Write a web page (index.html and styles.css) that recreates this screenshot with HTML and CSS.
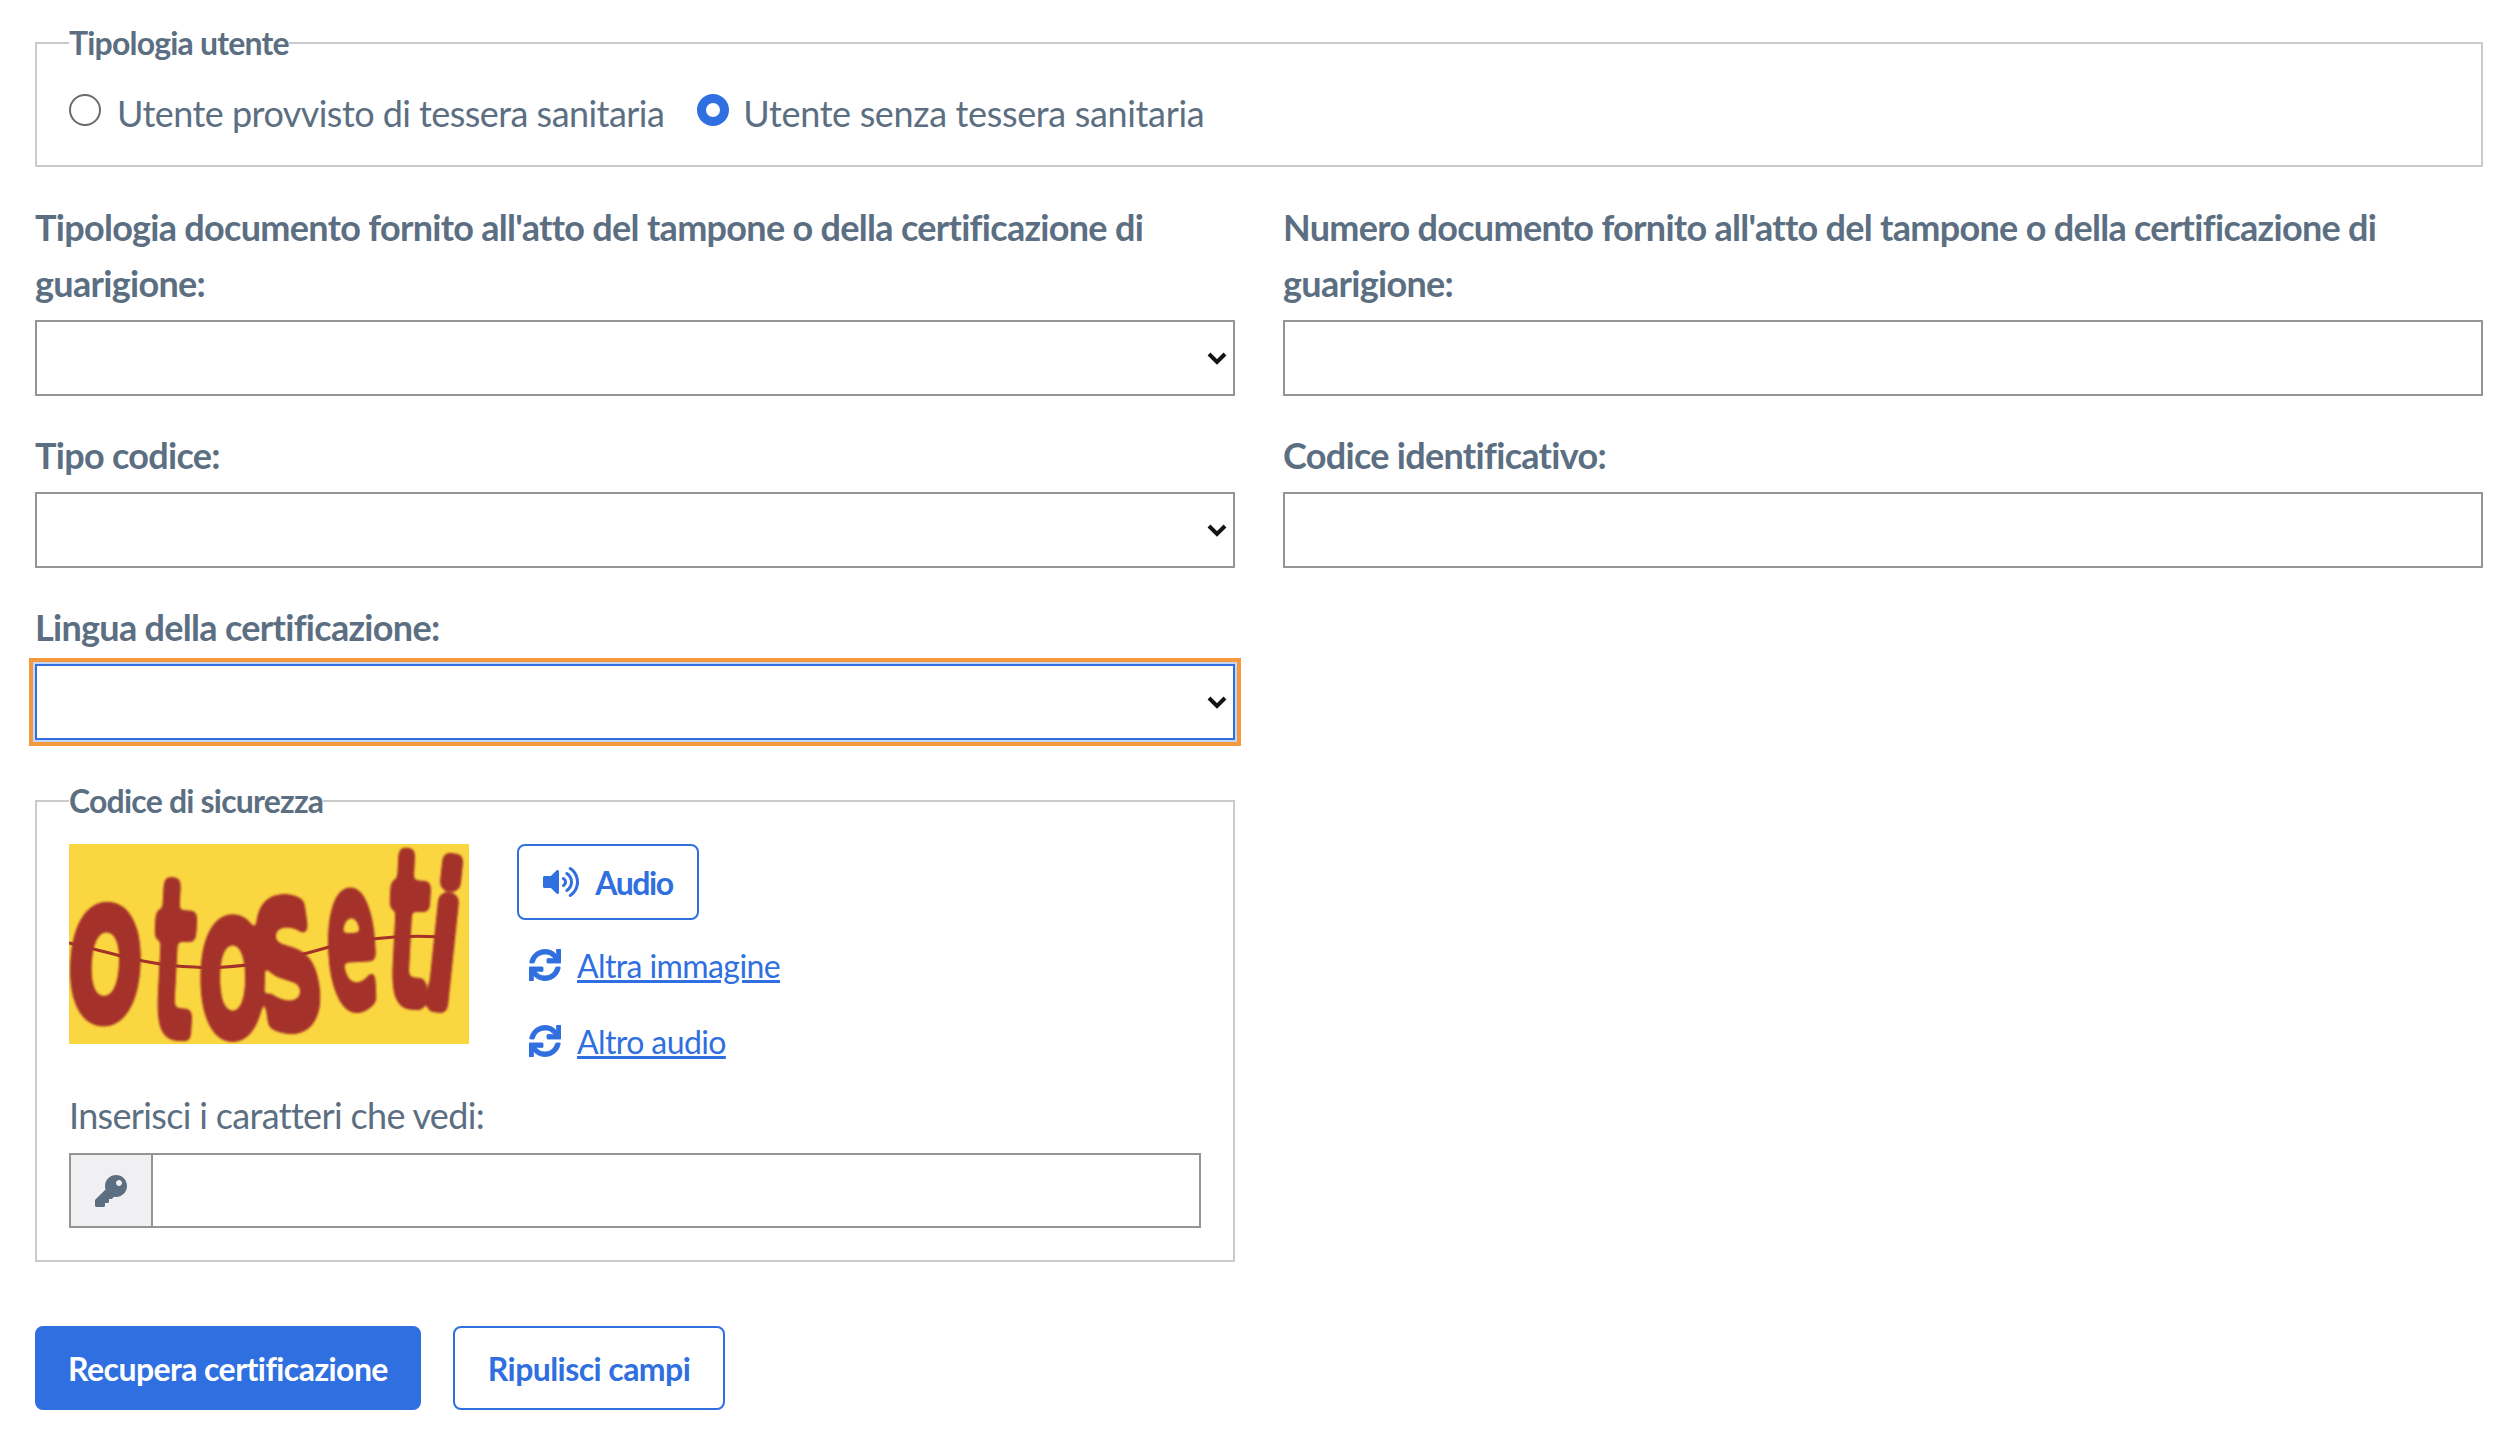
FILE: index.html
```html
<!DOCTYPE html>
<html lang="it">
<head>
    <meta charset="UTF-8">
    <meta name="viewport" content="width=device-width, initial-scale=1.0">
    <title>Recupera certificazione</title>
    <link rel="stylesheet" href="styles.css">
</head>
<body>
    <form class="page">
        <fieldset class="box box-user">
            <legend>Tipologia utente</legend>
            <div class="radio-row">
                <label class="radio"><input type="radio" name="tipo"><span>Utente provvisto di tessera sanitaria</span></label>
                <label class="radio"><input type="radio" name="tipo" checked><span>Utente senza tessera sanitaria</span></label>
            </div>
        </fieldset>

        <div class="form-grid">
            <div class="field">
                <label class="field-label">Tipologia documento fornito all'atto del tampone o della certificazione di guarigione:</label>
                <select class="control"><option></option></select>
            </div>
            <div class="field">
                <label class="field-label">Numero documento fornito all'atto del tampone o della certificazione di guarigione:</label>
                <input class="control" type="text">
            </div>
            <div class="field">
                <label class="field-label">Tipo codice:</label>
                <select class="control"><option></option></select>
            </div>
            <div class="field">
                <label class="field-label">Codice identificativo:</label>
                <input class="control" type="text">
            </div>
            <div class="field">
                <label class="field-label">Lingua della certificazione:</label>
                <select class="control focused"><option></option></select>
            </div>
        </div>

        <fieldset class="box box-captcha">
            <legend>Codice di sicurezza</legend>
            <div class="captcha-row">
                <svg class="captcha" viewBox="0 0 400 200" role="img" aria-label="otoseti">
                    <defs>
                        <filter id="soft" x="0" y="0" width="400" height="200" filterUnits="userSpaceOnUse" primitiveUnits="userSpaceOnUse">
                            <feGaussianBlur stdDeviation="2.5"/>
                            <feComponentTransfer><feFuncA type="linear" slope="9" intercept="-3.6"/></feComponentTransfer>
                            <feGaussianBlur stdDeviation="0.8"/>
                        </filter>
                        <filter id="line-soft" x="0" y="0" width="400" height="200" filterUnits="userSpaceOnUse" primitiveUnits="userSpaceOnUse">
                            <feGaussianBlur stdDeviation="0.7"/>
                        </filter>
                    </defs>
                    <rect width="400" height="200" fill="#fad640"/>
                    <path class="captcha-line" filter="url(#line-soft)" d="M0 99 C40 108 80 122 125 123 C170 126 220 115 260 103 C300 93 340 90 385 94"/>
                    <g class="captcha-letters" filter="url(#soft)">
                        <text transform="translate(-3,170) rotate(3) scale(1.2,1.9)">o</text>
                        <text transform="translate(82,187) rotate(3) scale(.98,2.08)">t</text>
                        <text transform="translate(130,187) scale(1.1,1.94)">o</text>
                        <text transform="translate(198,182) rotate(-8) scale(1.12,2.14)">s</text>
                        <text transform="translate(261,160) rotate(-3) scale(.8,1.92)">e</text>
                        <text transform="translate(317,156) rotate(3) scale(.95,2.06)">t</text>
                        <text transform="translate(352,159) rotate(6) scale(1.2,1.9)">i</text>
                    </g>
                </svg>
                <div class="captcha-actions">
                    <button type="button" class="btn btn-outline btn-audio">
                        <svg class="icon icon-audio" viewBox="0 0 576 512"><path d="M215.03 71.05L126.06 160H24c-13.26 0-24 10.74-24 24v144c0 13.25 10.74 24 24 24h102.06l88.97 88.95c15.03 15.03 40.97 4.47 40.97-16.97V88.02c0-21.46-25.96-31.98-40.97-16.97zm233.32-51.08c-11.17-7.33-26.18-4.24-33.51 6.95-7.34 11.17-4.22 26.18 6.95 33.51 66.27 43.49 105.82 116.6 105.82 195.58 0 78.98-39.55 152.09-105.82 195.58-11.17 7.32-14.29 22.34-6.95 33.5 7.04 10.71 21.93 14.56 33.51 6.95C528.27 439.58 576 351.33 576 256S528.27 72.43 448.35 19.97zM480 256c0-63.53-32.06-121.94-85.77-156.24-11.19-7.14-26.03-3.82-33.12 7.46s-3.78 26.21 7.41 33.36C408.27 165.97 432 209.11 432 256s-23.73 90.03-63.48 115.42c-11.19 7.14-14.5 22.07-7.41 33.36 6.51 10.36 21.12 15.14 33.12 7.46C447.94 377.94 480 319.54 480 256zm-141.77-76.87c-11.58-6.33-26.19-2.16-32.61 9.45-6.39 11.61-2.16 26.2 9.45 32.61C327.98 228.28 336 241.63 336 256c0 14.38-8.02 27.72-20.92 34.81-11.61 6.41-15.84 21-9.45 32.61 6.43 11.66 21.05 15.8 32.61 9.45 28.23-15.55 45.77-45 45.77-76.88s-17.54-61.32-45.78-76.86z"/></svg>
                        Audio
                    </button>
                    <a class="refresh-link first" href="#">
                        <svg class="icon icon-refresh" viewBox="0 0 512 512"><path d="M440.65 12.57l4 82.77A247.16 247.16 0 0 0 255.83 8C134.73 8 33.91 94.92 12.29 209.82A12 12 0 0 0 24.09 224h49.05a12 12 0 0 0 11.67-9.26 175.91 175.91 0 0 1 317-56.94l-101.46-4.86a12 12 0 0 0-12.57 12v47.41a12 12 0 0 0 12 12H500a12 12 0 0 0 12-12V12a12 12 0 0 0-12-12h-47.37a12 12 0 0 0-11.98 12.57zM255.83 432a175.61 175.61 0 0 1-146-77.8l101.8 4.87a12 12 0 0 0 12.57-12v-47.4a12 12 0 0 0-12-12H12a12 12 0 0 0-12 12V500a12 12 0 0 0 12 12h47.35a12 12 0 0 0 12-12.6l-4.15-82.57A247.17 247.17 0 0 0 255.83 504c121.11 0 221.93-86.92 243.55-201.82a12 12 0 0 0-11.8-14.18h-49.05a12 12 0 0 0-11.67 9.26A175.86 175.86 0 0 1 255.83 432z"/></svg>
                        <span>Altra immagine</span>
                    </a>
                    <a class="refresh-link" href="#">
                        <svg class="icon icon-refresh" viewBox="0 0 512 512"><path d="M440.65 12.57l4 82.77A247.16 247.16 0 0 0 255.83 8C134.73 8 33.91 94.92 12.29 209.82A12 12 0 0 0 24.09 224h49.05a12 12 0 0 0 11.67-9.26 175.91 175.91 0 0 1 317-56.94l-101.46-4.86a12 12 0 0 0-12.57 12v47.41a12 12 0 0 0 12 12H500a12 12 0 0 0 12-12V12a12 12 0 0 0-12-12h-47.37a12 12 0 0 0-11.98 12.57zM255.83 432a175.61 175.61 0 0 1-146-77.8l101.8 4.87a12 12 0 0 0 12.57-12v-47.4a12 12 0 0 0-12-12H12a12 12 0 0 0-12 12V500a12 12 0 0 0 12 12h47.35a12 12 0 0 0 12-12.6l-4.15-82.57A247.17 247.17 0 0 0 255.83 504c121.11 0 221.93-86.92 243.55-201.82a12 12 0 0 0-11.8-14.18h-49.05a12 12 0 0 0-11.67 9.26A175.86 175.86 0 0 1 255.83 432z"/></svg>
                        <span>Altro audio</span>
                    </a>
                </div>
            </div>
            <label class="captcha-label">Inserisci i caratteri che vedi:</label>
            <div class="input-group">
                <span class="addon">
                    <svg class="icon icon-key" viewBox="0 0 512 512"><path d="M512 176.001C512 273.203 433.202 352 336 352c-11.22 0-22.19-1.062-32.827-3.069l-24.012 27.014A23.999 23.999 0 0 1 261.223 384H224v40c0 13.255-10.745 24-24 24h-40v40c0 13.255-10.745 24-24 24H24c-13.255 0-24-10.745-24-24v-78.059c0-6.365 2.529-12.47 7.029-16.971l161.802-161.802C163.108 213.814 160 195.271 160 176 160 78.798 238.797.001 335.999 0 433.488-.001 512 78.511 512 176.001zM336 128c0 26.51 21.49 48 48 48s48-21.49 48-48-21.49-48-48-48-48 21.49-48 48z"/></svg>
                </span>
                <input type="text">
            </div>
        </fieldset>

        <div class="actions">
            <button type="button" class="btn btn-primary btn-submit">Recupera certificazione</button>
            <button type="button" class="btn btn-outline btn-clear">Ripulisci campi</button>
        </div>
    </form>
</body>
</html>
```

FILE: styles.css
```css
* {
    box-sizing: border-box;
}
html, body {
    margin: 0;
    background: #fff;
}
body {
    font-family: "Lato", "Open Sans", sans-serif;
    font-size: 36px;
    color: #5c6f82;
}
.page {
    width: 2510px;
    padding: 20px 27px 0 35px;
}
.box {
    margin: 0;
    padding: 0 32px;
    border: 2px solid #c9cace;
    min-width: 0;
}
legend {
    padding: 0;
    height: 46px;
    line-height: 46px;
    font-size: 32px;
    font-weight: 700;
    letter-spacing: -0.8px;
}
.box-user {
    height: 147px;
}
.radio-row {
    display: flex;
    gap: 33px;
    padding-top: 19px;
}
.radio {
    display: flex;
    align-items: center;
    gap: 16px;
    line-height: 56px;
    letter-spacing: -0.55px;
}
.radio + .radio {
    gap: 14px;
    letter-spacing: -0.35px;
}
.radio input {
    appearance: none;
    margin: 0 0 7px;
    width: 32px;
    height: 32px;
    border: 2px solid #6a6a6a;
    border-radius: 50%;
    background: #fff;
}
.radio input:checked {
    border: 9px solid #306fdf;
}
.form-grid {
    display: grid;
    grid-template-columns: 1200px 1200px;
    column-gap: 48px;
    row-gap: 31px;
    margin-top: 32px;
}
.field-label {
    display: block;
    line-height: 56px;
    margin-bottom: 9px;
    font-weight: 700;
    letter-spacing: -0.7px;
}
.control {
    display: block;
    width: 100%;
    height: 76px;
    border: 2px solid #949494;
    border-radius: 0;
    background-color: #fff;
    font-size: 36px;
}
select.control {
    appearance: none;
    background-image: url("data:image/svg+xml;utf8,<svg xmlns='http://www.w3.org/2000/svg' viewBox='0 0 20 14'><path d='M2 3l8 8 8-8' fill='none' stroke='%23141414' stroke-width='4'/></svg>");
    background-repeat: no-repeat;
    background-size: 20px 14px;
    background-position: right 6px center;
}
.focused {
    border-color: #306fdf;
    box-shadow: 0 0 0 2px #c5d6f6, 0 0 0 6px #f59a3c;
}
.box-captcha {
    width: 1200px;
    height: 484px;
    margin-top: 38px;
}
.captcha-row {
    display: flex;
    gap: 48px;
    padding-top: 20px;
}
.captcha {
    display: block;
    flex: none;
    width: 400px;
    height: 200px;
    overflow: visible;
}
.captcha-letters text {
    font-family: "DejaVu Sans", sans-serif;
    font-weight: 400;
    font-size: 100px;
    fill: #a5302b;
    stroke: #a5302b;
    stroke-width: 8px;
    stroke-linejoin: round;
}
.captcha-line {
    fill: none;
    stroke: #a5302b;
    stroke-width: 3px;
}
.captcha-actions {
    display: flex;
    flex-direction: column;
    align-items: flex-start;
}
.btn {
    border-radius: 8px;
    font-family: inherit;
    font-size: 32px;
    font-weight: 700;
    letter-spacing: -0.57px;
    padding: 0;
}
.btn-outline {
    background: #fff;
    border: 2px solid #306fdf;
    color: #306fdf;
}
.btn-primary {
    background: #306fdf;
    border: 2px solid #306fdf;
    color: #fff;
}
.btn-audio {
    display: flex;
    align-items: center;
    justify-content: center;
    gap: 16px;
    width: 182px;
    height: 76px;
    letter-spacing: -1.4px;
}
.icon {
    display: block;
    fill: currentColor;
}
.icon-audio {
    width: 36px;
    height: 32px;
}
.refresh-link {
    display: flex;
    align-items: center;
    gap: 16px;
    height: 56px;
    margin: 20px 0 0 12px;
    color: #306fdf;
    font-size: 32px;
    letter-spacing: -0.6px;
}
.refresh-link.first {
    margin-top: 17px;
}
.icon-refresh {
    width: 32px;
    height: 32px;
    stroke: currentColor;
    stroke-width: 14px;
}
.captcha-label {
    display: block;
    line-height: 56px;
    margin-top: 18px;
    margin-bottom: 10px;
    letter-spacing: -0.66px;
}
.input-group {
    display: flex;
    height: 75px;
    border: 2px solid #949494;
}
.addon {
    display: flex;
    align-items: center;
    justify-content: center;
    width: 82px;
    background: #f0f0f2;
    border-right: 2px solid #949494;
}
.icon-key {
    width: 32px;
    height: 32px;
}
.input-group input {
    flex: 1;
    border: 0;
    min-width: 0;
}
.actions {
    display: flex;
    gap: 32px;
    margin-top: 64px;
    padding-bottom: 19px;
}
.btn-submit {
    width: 386px;
    height: 84px;
}
.btn-clear {
    width: 272px;
    height: 84px;
}
```
